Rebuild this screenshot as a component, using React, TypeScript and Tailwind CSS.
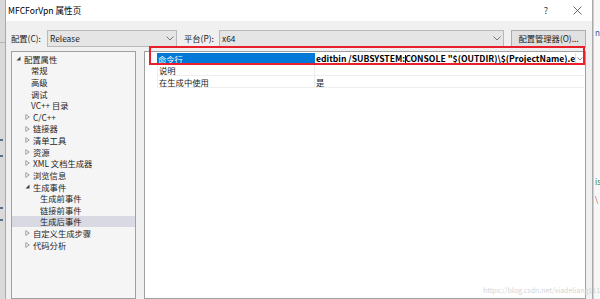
import React from "react";

const Chevron = ({ className = "" }: { className?: string }) => (
  <svg width="8" height="5" viewBox="0 0 8 5" className={className}>
    <path d="M0.5 0.5 L4 4 L7.5 0.5" fill="none" stroke="#6b6b6b" strokeWidth="0.9" />
  </svg>
);

const Expanded = () => (
  <svg width="5" height="5" viewBox="0 0 5 5" className="shrink-0">
    <path d="M4.5 0.5 L4.5 4.5 L0.5 4.5 Z" fill="#404040" />
  </svg>
);

const Collapsed = () => (
  <svg width="5" height="6" viewBox="0 0 5 6" className="shrink-0">
    <path d="M0.8 0.6 L4.2 3 L0.8 5.4 Z" fill="none" stroke="#8a8a8a" strokeWidth="0.8" />
  </svg>
);

type Item = { label: string; indent: number; icon?: "exp" | "col"; selected?: boolean };

const items: Item[] = [
  { label: "配置属性", indent: 4, icon: "exp" },
  { label: "常规", indent: 19 },
  { label: "高级", indent: 19 },
  { label: "调试", indent: 19 },
  { label: "VC++ 目录", indent: 19 },
  { label: "C/C++", indent: 13, icon: "col" },
  { label: "链接器", indent: 13, icon: "col" },
  { label: "清单工具", indent: 13, icon: "col" },
  { label: "资源", indent: 13, icon: "col" },
  { label: "XML 文档生成器", indent: 13, icon: "col" },
  { label: "浏览信息", indent: 13, icon: "col" },
  { label: "生成事件", indent: 13, icon: "exp" },
  { label: "生成前事件", indent: 28 },
  { label: "链接前事件", indent: 28 },
  { label: "生成后事件", indent: 28, selected: true },
  { label: "自定义生成步骤", indent: 13, icon: "col" },
  { label: "代码分析", indent: 13, icon: "col" },
];

export default function App() {
  return (
    <div
      className="relative flex w-[600px] h-[299px] overflow-hidden bg-[#f0f0f0] text-[#1b1b1b]"
      style={{ fontFamily: "'Microsoft YaHei UI', 'Noto Sans CJK SC', sans-serif" }}
    >
      {/* left background strip */}
      <div className="w-[5px] shrink-0 bg-[#d9d9d9] flex flex-col">
        <div className="h-[42px]" />
        <div className="h-px bg-[#b5b5b5]" />
        <div className="h-[96px]" />
        <div className="h-[2px] w-[3px] bg-[#5a6f8c]" />
        <div className="h-[14px]" />
        <div className="h-[2px] w-[3px] bg-[#5a6f8c]" />
        <div className="h-[50px]" />
        <div className="h-[2px] w-[3px] bg-[#5a6f8c]" />
        <div className="h-[10px]" />
        <div className="h-[2px] w-[3px] bg-[#5a6f8c]" />
      </div>

      {/* dialog */}
      <div className="w-[588px] shrink-0 flex flex-col border-x border-[#a8a8a8] bg-[#f0f0f0]">
        {/* title bar */}
        <div className="h-[21px] shrink-0 bg-white flex items-center pl-[2px]">
          <span className="text-[8.6px] leading-none text-black">MFCForVpn 属性页</span>
          <div className="flex-1" />
          <span className="text-[9px] leading-none text-[#333] mr-[25px]">?</span>
          <svg width="9" height="9" viewBox="0 0 9 9" className="mr-[10px]">
            <path d="M0.5 0.5 L8.5 8.5 M8.5 0.5 L0.5 8.5" stroke="#444" strokeWidth="0.8" />
          </svg>
        </div>

        {/* body */}
        <div className="flex flex-col px-[5px] pt-[9px] flex-1">
          <div className="flex items-center h-[17px] text-[8.3px] leading-none">
            <span className="w-[36px]">配置(C):</span>
            <div className="w-[130px] h-[17px] flex items-center bg-[#e5e5e5] border border-[#b9b9b9] pl-[2px] pr-[2px]">
              <span className="flex-1">Release</span>
              <Chevron />
            </div>
            <span className="ml-[7px] w-[35px]">平台(P):</span>
            <div className="w-[285px] h-[17px] flex items-center bg-[#e5e5e5] border border-[#b9b9b9] pl-[2px] pr-[2px]">
              <span className="flex-1">x64</span>
              <Chevron />
            </div>
            <div className="ml-[7px] w-[75px] h-[18px] flex items-center justify-center bg-[#e1e1e1] border border-[#adadad]">
              配置管理器(O)...
            </div>
          </div>

          <div className="flex gap-[8px] mt-[4px] flex-1">
            {/* tree */}
            <div className="w-[125px] shrink-0 border border-[#a0a0a0] bg-[#f5f5f5] pt-[1px] text-[8.3px]">
              {items.map((it) => (
                <div
                  key={it.label}
                  className={`h-[11.625px] flex items-center ${it.selected ? "bg-[#d9d9e4]" : ""}`}
                  style={{ paddingLeft: it.indent }}
                >
                  {it.icon === "exp" && <Expanded />}
                  {it.icon === "col" && <Collapsed />}
                  <span
                    className={`leading-none whitespace-nowrap text-[#1e1e1e] ${it.icon ? "ml-[3px]" : ""}`}
                  >
                    {it.label}
                  </span>
                </div>
              ))}
            </div>

            {/* property grid */}
            <div className="w-[442px] shrink-0 border border-[#a0a0a0] bg-white pt-[1px] text-[8.3px]">
              <div className="flex h-[11.7px]">
                <div className="w-[12px] shrink-0" />
                <div className="w-[158px] shrink-0 bg-[#0078d7] text-white flex items-center pl-[1px] leading-none">
                  命令行
                </div>
                <div className="flex-1 flex items-center pl-[1px] min-w-0 bg-white">
                  <span className="flex-1 whitespace-nowrap overflow-hidden font-bold leading-none text-black text-[8.6px]">
                    editbin /SUBSYSTEM:<span className="inline-block w-px h-[9px] bg-black align-middle -mx-[0.5px]" />CONSOLE "$(OUTDIR)\$(ProjectName).exe"
                  </span>
                  <div className="w-[9px] h-full flex items-center justify-center border-l border-[#e0e0e0] mr-[1px]">
                    <svg width="6" height="4" viewBox="0 0 6 4">
                      <path d="M0.5 0.5 L3 3 L5.5 0.5" fill="none" stroke="#777" strokeWidth="0.8" />
                    </svg>
                  </div>
                </div>
              </div>
              <div className="flex h-[11.7px] border-b border-[#eeeeee] ml-[12px] mr-[1px]">
                <div className="w-[158px] shrink-0 flex items-center pl-[1px] leading-none border-l border-r border-[#eeeeee]">
                  说明
                </div>
                <div className="flex-1" />
              </div>
              <div className="flex h-[11.7px] border-b border-[#eeeeee] ml-[12px] mr-[1px]">
                <div className="w-[158px] shrink-0 flex items-center pl-[1px] leading-none border-l border-r border-[#eeeeee]">
                  在生成中使用
                </div>
                <div className="flex-1 flex items-center pl-[1px] leading-none">是</div>
              </div>
            </div>
          </div>
        </div>
      </div>

      {/* right background strip */}
      <div className="w-[7px] shrink-0 bg-[#f7f7f7] flex border-l border-[#d0d0d0] relative">
        <div className="w-px bg-[#dcdcdc]" />
        <div className="flex flex-col pl-[1px] text-[8px] leading-none">
          <div className="h-[29px]" />
          <span className="text-[#3d5a96]">n1</span>
          <div className="h-[141px]" />
          <span className="text-[#3a8a3a]">is</span>
          <div className="h-[9px]" />
          <span className="text-[#c04040]">\</span>
        </div>
      </div>

      {/* red highlight rectangle */}
      <div className="absolute left-[149px] top-[46px] w-[436px] h-[19px] border-2 border-[#e8202a] pointer-events-none" />

      {/* watermark */}
      <div className="absolute left-[483px] top-[287px] text-[7px] leading-none text-[#d4d4d4] whitespace-nowrap">
        https://blog.csdn.net/xiadeliang1111
      </div>
    </div>
  );
}
